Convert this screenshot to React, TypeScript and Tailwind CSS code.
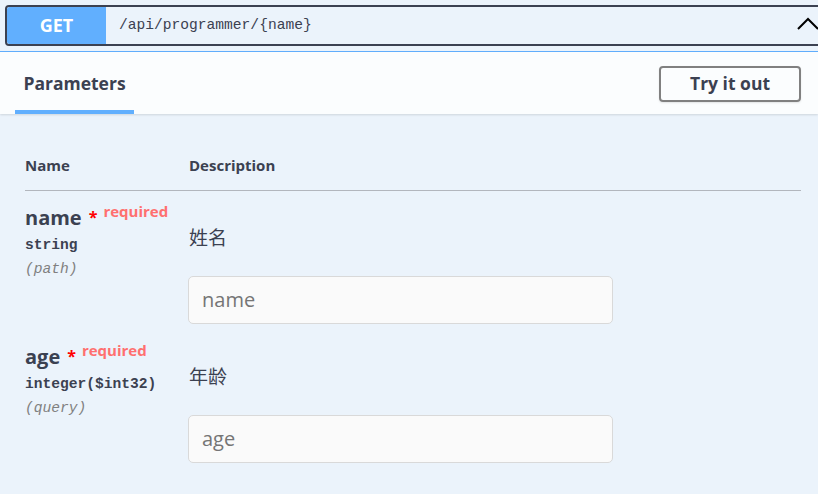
import React from "react";

const sans = { fontFamily: '"Open Sans", "Noto Sans CJK SC", sans-serif' };
const mono = { fontFamily: '"Liberation Mono", "Courier New", monospace' };

function Row({
  name,
  type,
  loc,
  desc,
  placeholder,
}: {
  name: string;
  type: string;
  loc: string;
  desc: string;
  placeholder: string;
}) {
  return (
    <div className="flex h-[139px]">
      <div className="w-[163px] pt-[15px]">
        <div className="flex items-start h-[24px]">
          <span className="text-[20px] leading-[24px] font-bold text-[#3b4151]">{name}</span>
          <span className="ml-[7px] text-[16px] leading-[20px] font-bold text-[#ff0000] mt-[1px]">*</span>
          <span className="ml-[6px] text-[15px] leading-[16px] font-bold text-[#ff6f6f] -mt-[3px]">required</span>
        </div>
        <div className="mt-[5px] h-[20px] text-[14.6px] leading-[20px] text-[#3b4151] font-semibold" style={mono}>
          {type}
        </div>
        <div className="mt-[4px] h-[20px] text-[14.6px] leading-[20px] italic text-[#808080]" style={mono}>
          ({loc})
        </div>
      </div>
      <div className="flex-1 pt-[34px]">
        <div className="h-[26px] text-[19px] leading-[26px] text-[#3b4151] pl-[1px]">{desc}</div>
        <div className="mt-[25px] w-[425px] h-[48px] rounded-[5px] border border-[#d9d9d9] bg-[#fafafa] flex items-center pl-[13px]">
          <span className="text-[20px] text-[#757575]">{placeholder}</span>
        </div>
      </div>
    </div>
  );
}

export default function App() {
  return (
    <div className="w-[818px] h-[494px] overflow-hidden bg-[#ebf3fb]" style={sans}>
      {/* summary */}
      <div className="pt-[5px] pb-[5px] pl-[5px] border-b border-[#61affe]">
        <div className="w-[830px] h-[41px] border-2 border-[#3b4151] rounded-[4px] flex items-center overflow-hidden">
          <div className="w-[99px] h-full bg-[#61affe] flex items-center justify-center rounded-l-[2px]">
            <span className="text-white font-bold text-[18px]">GET</span>
          </div>
          <span className="ml-[13px] text-[14.6px] text-[#3b4151]" style={mono}>
            /api/programmer/{"{name}"}
          </span>
          <div className="flex-1" />
          <svg width="22" height="14" viewBox="0 0 22 14" className="mr-[14px] mt-[-3px]">
            <path d="M1 12 L11 2 L21 12" fill="none" stroke="#000" strokeWidth="2" />
          </svg>
        </div>
      </div>
      {/* section header */}
      <div className="h-[62px] bg-[#fbfdfe] shadow-[0_1px_2px_rgba(0,0,0,0.12)] flex items-stretch justify-between pl-[15px] pr-[17px] relative">
        <div className="w-[119px] flex items-center justify-center border-b-[4px] border-[#61affe] pt-[5px]">
          <span className="text-[17.5px] font-bold text-[#3b4151]">Parameters</span>
        </div>
        <div className="flex items-center pt-[1px]">
          <div className="w-[142px] h-[36px] border-2 border-[#808080] rounded-[4px] flex items-center justify-center shadow-[0_1px_2px_rgba(0,0,0,0.1)]">
            <span className="text-[17.5px] font-bold text-[#3b4151]">Try it out</span>
          </div>
        </div>
      </div>
      {/* table */}
      <div className="px-[25px] pr-[17px]">
        <div className="flex pt-[41px] pb-[15px] border-b border-[#b2b6bd]">
          <div className="w-[164px] text-[15px] leading-[20px] font-bold text-[#3b4151]">Name</div>
          <div className="text-[15px] leading-[20px] font-bold text-[#3b4151]">Description</div>
        </div>
        <Row name="name" type="string" loc="path" desc="姓名" placeholder="name" />
        <Row name="age" type="integer($int32)" loc="query" desc="年龄" placeholder="age" />
      </div>
    </div>
  );
}
